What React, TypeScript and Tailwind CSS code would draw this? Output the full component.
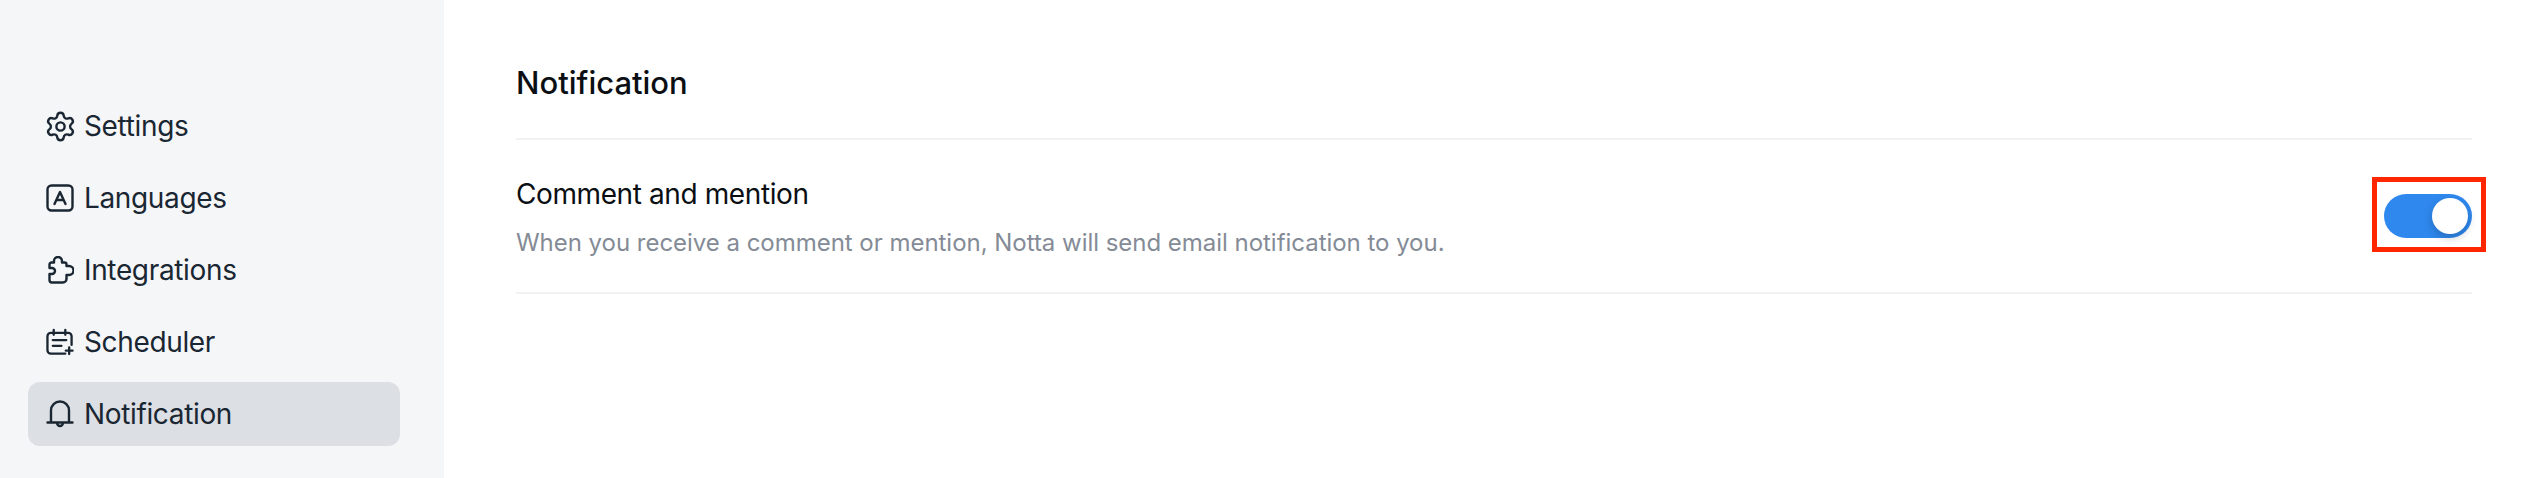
import { Settings } from 'lucide-react'
import type { ReactNode } from 'react'

function LanguageIcon() {
  return (
    <svg width="28" height="28" viewBox="0 0 28 28" fill="none" stroke="currentColor" strokeWidth="2.4" strokeLinecap="round" strokeLinejoin="round">
      <rect x="1.5" y="1.5" width="25" height="25" rx="4" />
      <path d="M8.500 20 14 8l5.500 12M10.500 16h7" />
    </svg>
  )
}

function PuzzleIcon() {
  return (
    <svg width="28" height="28" viewBox="0 0 28 28" fill="none" stroke="currentColor" strokeWidth="2.4" strokeLinecap="round" strokeLinejoin="round">
      <path d="M6 26.500H17a3.500 3.500 0 0 0 3.500-3.500V19H23a4.500 4.500 0 0 0 0-9H20.500V8.500a2 2 0 0 0-2-2H16V5a4 4 0 0 0-8 0V6.500H5.500a2 2 0 0 0-2 2V12H6a3 3 0 0 1 0 6H3.500v6a2.500 2.500 0 0 0 2.500 2.500Z" />
    </svg>
  )
}

function SchedulerIcon() {
  return (
    <svg width="29" height="28" viewBox="0 0 29 28" fill="none" stroke="currentColor" strokeWidth="2.4" strokeLinecap="round" strokeLinejoin="round">
      <path d="M20 26H5a3.500 3.500 0 0 1-3.500-3.500V8A3.500 3.500 0 0 1 5 4.500h18A3.500 3.500 0 0 1 26.500 8v9" />
      <path d="M8 1.500v5M20 1.500v5M7 12h14M7 18h9M24 19.500v7M20.500 23h7" />
    </svg>
  )
}

function BellIcon() {
  return (
    <svg width="28" height="28" viewBox="0 0 28 28" fill="none" stroke="currentColor" strokeWidth="2.4" strokeLinecap="round" strokeLinejoin="round">
      <path d="M5 22.500V10.500a9 9 0 0 1 18 0v12M1.500 22.500h25M11 23a3 3 0 0 0 6 0" />
    </svg>
  )
}

const items: { label: string; icon: ReactNode; active?: boolean }[] = [
  { label: 'Settings', icon: <Settings size={33} strokeWidth={1.75} className="shrink-0" /> },
  { label: 'Languages', icon: <LanguageIcon /> },
  { label: 'Integrations', icon: <PuzzleIcon /> },
  { label: 'Scheduler', icon: <SchedulerIcon /> },
  { label: 'Notification', icon: <BellIcon />, active: true },
]

export default function App() {
  return (
    <div className="relative flex h-[478px] w-[2544px] overflow-hidden bg-white font-['Inter',sans-serif]">
      <aside className="flex w-[444px] shrink-0 flex-col gap-2 bg-[#f5f6f8] pl-7 pt-[94px]">
        {items.map(item => (
          <div
            key={item.label}
            className={`flex h-16 w-[372px] items-center gap-[10px] rounded-xl pl-[18px] text-[28px] tracking-[-0.35px] text-[#1a2733] ${item.active ? 'bg-[#dcdfe4]' : ''}`}
          >
            <span className="flex w-[28px] shrink-0 justify-center">{item.icon}</span>
            <span>{item.label}</span>
          </div>
        ))}
      </aside>
      <main className="ml-[72px] w-[1956px]">
        <div className="flex h-[140px] items-end border-b-2 border-[#f0f1f3] pb-[35px]">
          <h1 className="text-[31px] font-medium leading-[40px] text-[#0b0f14]">Notification</h1>
        </div>
        <div className="flex h-[154px] items-center justify-between border-b-2 border-[#f0f1f3]">
          <div className="pt-[3px]">
            <p className="text-[28px] leading-[36px] tracking-[-0.4px] text-[#0b0f14]">Comment and mention</p>
            <p className="mt-[15px] text-[24px] leading-[32px] tracking-[-0.03px] text-[#848b96]">
              When you receive a comment or mention, Notta will send email notification to you.
            </p>
          </div>
          <div className="relative flex h-11 w-[88px] items-center justify-end rounded-full bg-[#2f88ee] pr-1">
            <div className="h-9 w-9 rounded-full bg-white shadow-[0_4px_10px_rgba(0,0,0,0.2)]" />
            <div className="absolute -left-3 -top-[17px] h-[75px] w-[114px] border-[5px] border-[#ff2600]" />
          </div>
        </div>
      </main>
    </div>
  )
}
